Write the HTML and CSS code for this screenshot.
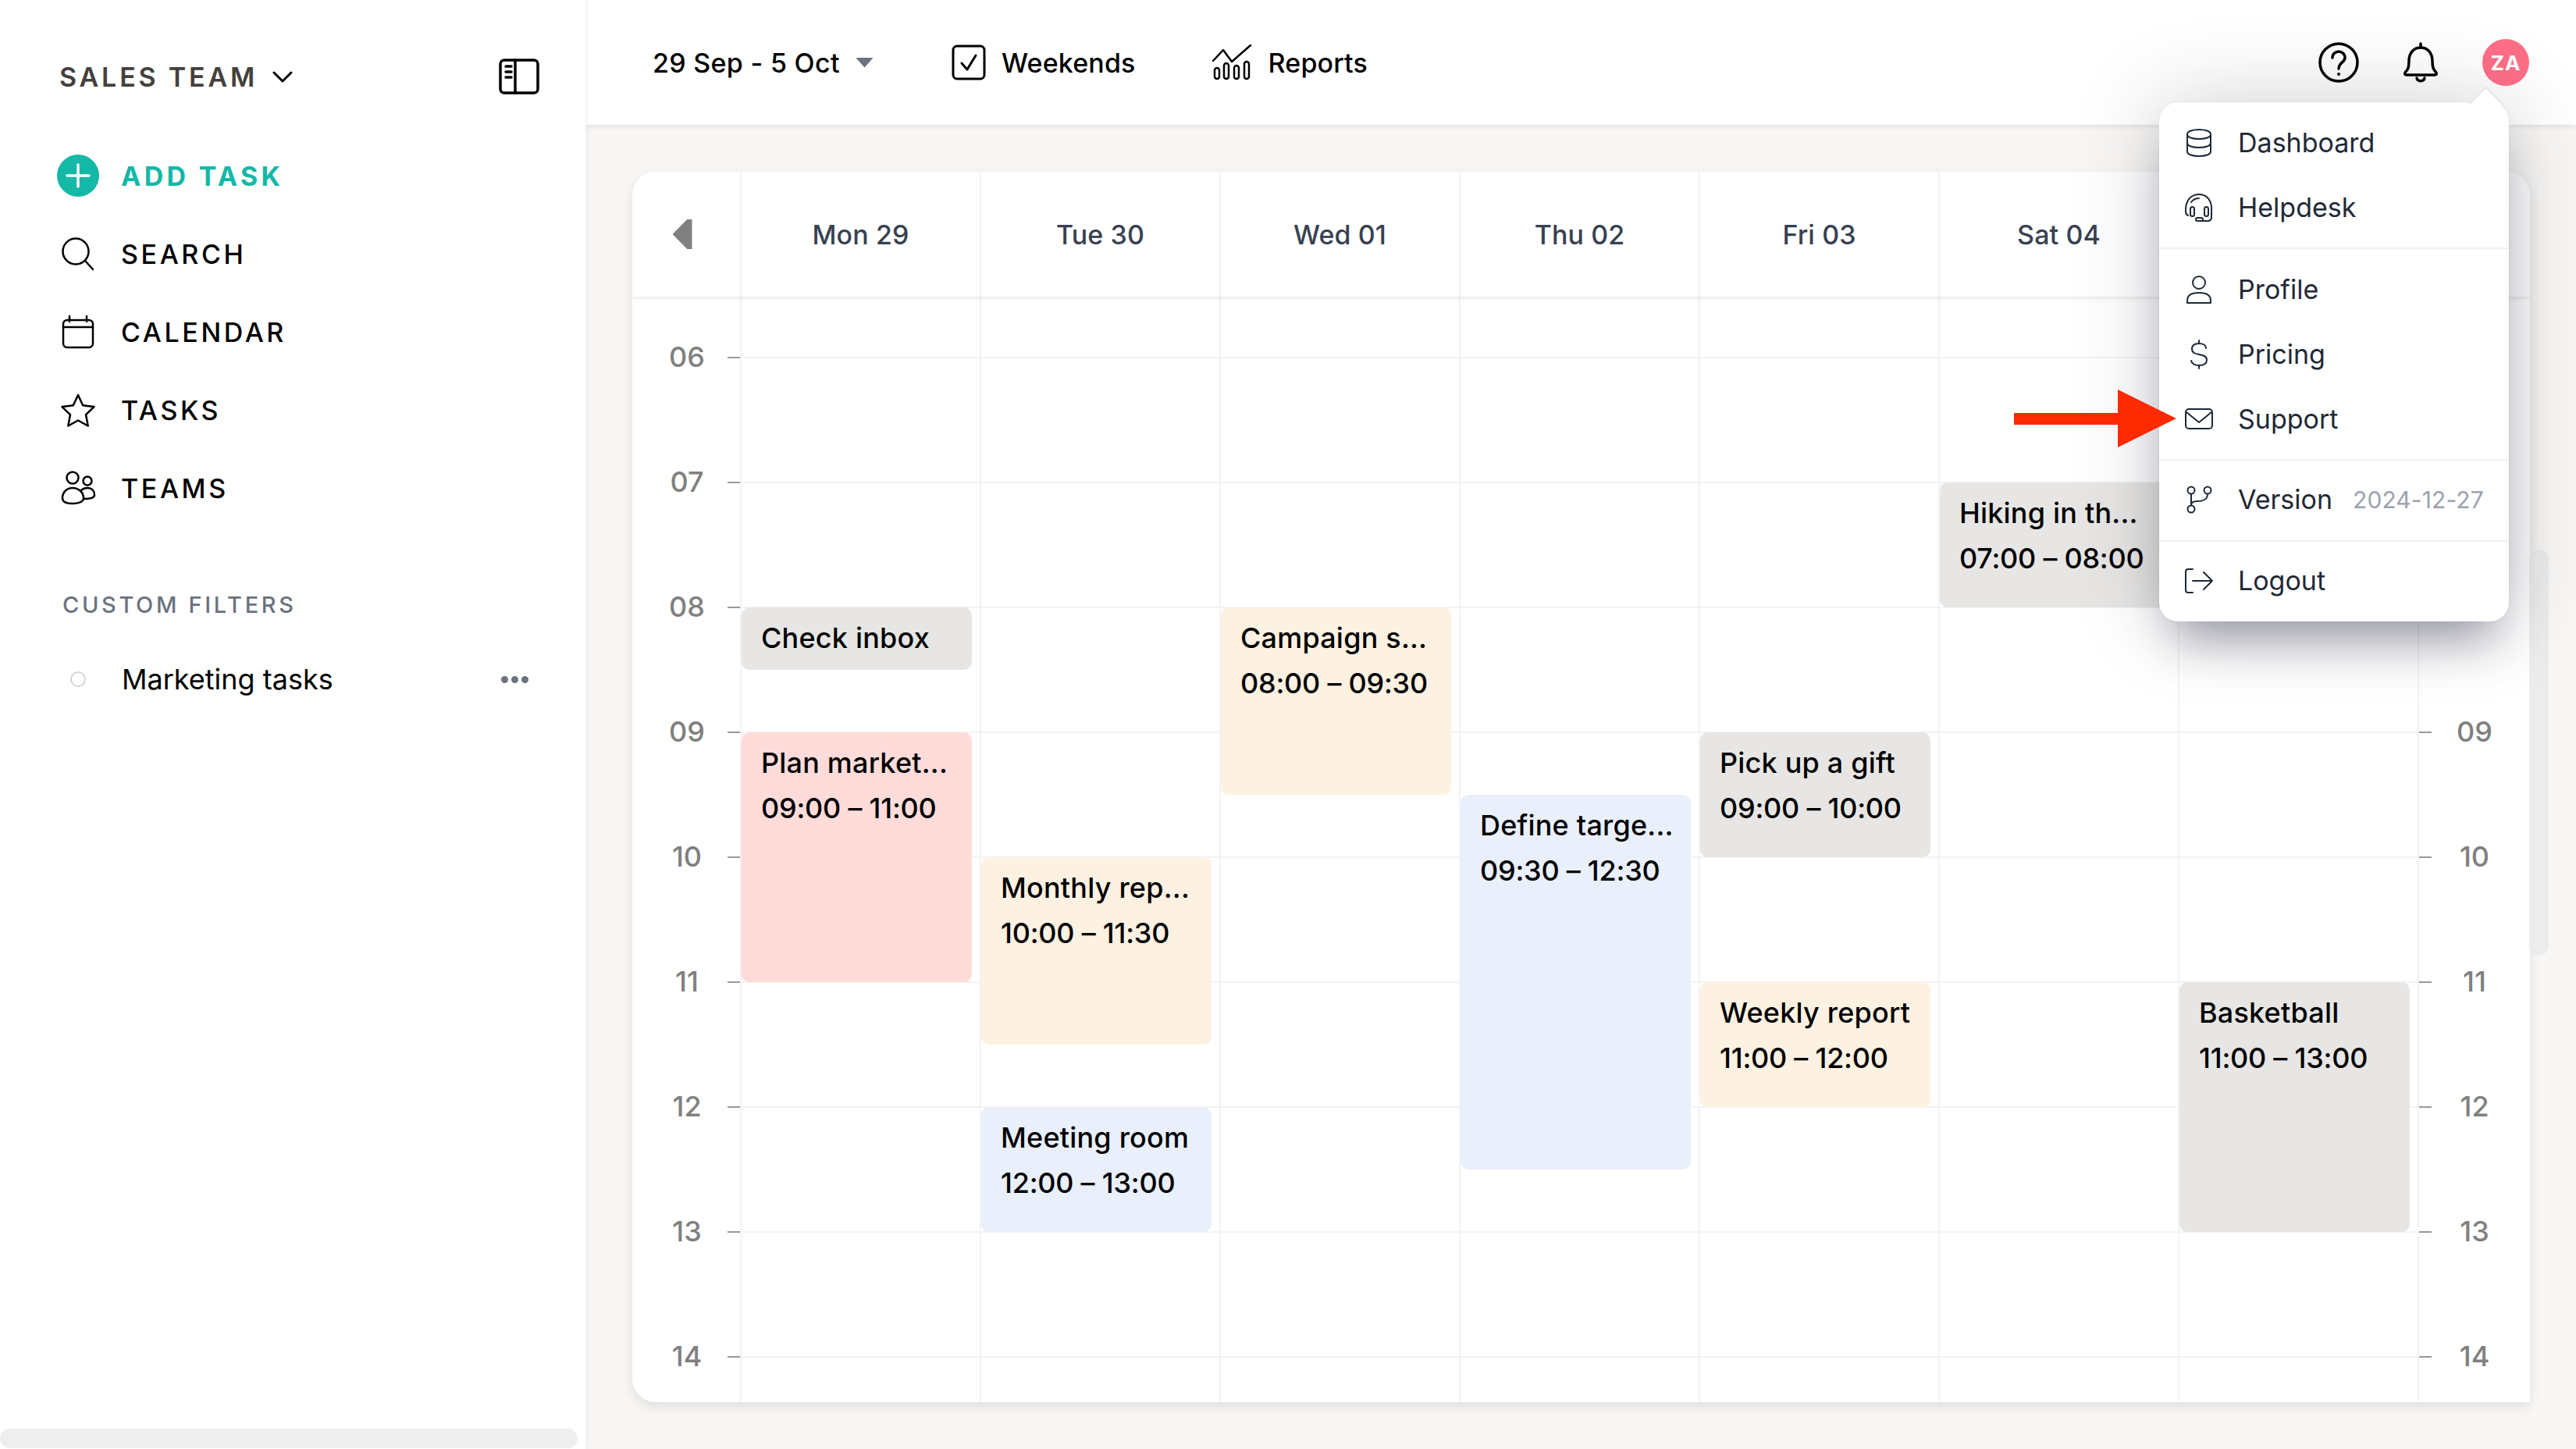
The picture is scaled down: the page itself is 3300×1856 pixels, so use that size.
FILE: index.html
```html
<!DOCTYPE html>
<html lang="en">
<head>
    <meta charset="UTF-8">
    <meta name="viewport" content="width=device-width, initial-scale=1.0">
    <title>Calendar</title>
    <link rel="stylesheet" href="styles.css">
</head>
<body>
    <div class="app">
        <aside class="sidebar">
            <div class="sidebar-head">
                <span class="team-name">SALES TEAM</span>
                <svg class="team-chevron" width="26" height="15" viewBox="0 0 26 15"><path d="M2 2l11 11L24 2"/></svg>
                <svg class="panel-icon" width="52" height="46" viewBox="0 0 52 46"><rect x="2" y="2" width="48" height="42" rx="5"/><path d="M21 2v42"/><path class="panel-dots" d="M9 10h7M9 17h7M9 24h7"/></svg>
            </div>
            <nav class="nav">
                <a class="nav-item nav-add">
                    <svg width="54" height="54" viewBox="0 0 54 54"><circle class="add-disc" cx="27" cy="27" r="27"/><path class="add-cross" d="M27 13v28M13 27h28"/></svg>
                    <span>ADD TASK</span>
                </a>
                <a class="nav-item">
                    <svg width="54" height="44" viewBox="0 0 54 44"><circle cx="24" cy="19" r="16.5"/><path d="M36 31l10 11"/></svg>
                    <span>SEARCH</span>
                </a>
                <a class="nav-item">
                    <svg width="54" height="44" viewBox="0 0 54 44"><rect x="8" y="7" width="38" height="35" rx="5"/><path d="M8 16h38M16 2v7M38 2v7"/></svg>
                    <span>CALENDAR</span>
                </a>
                <a class="nav-item">
                    <svg width="54" height="44" viewBox="0 0 54 44"><path d="M27 3l6.2 13.2 14.3 1.9-10.5 10 2.700 14.400L27 35.500 14.300 42.500l2.700-14.400-10.500-10 14.300-1.900z"/></svg>
                    <span>TASKS</span>
                </a>
                <a class="nav-item">
                    <svg width="54" height="44" viewBox="0 0 54 44"><circle cx="20" cy="9" r="7.500"/><circle cx="39" cy="13" r="5.500"/><path d="M7 35c0-8 6-13 13-13s14 5 14 13c0 5-7 7-14 7S7 40 7 35z"/><path d="M31 25c2-2 5-3 8-3 6 0 9 4 9 9 0 4-5 5-13 5"/></svg>
                    <span>TEAMS</span>
                </a>
            </nav>
            <h4 class="filters-title">CUSTOM FILTERS</h4>
            <div class="filter-row">
                <span class="filter-dot"></span>
                <span class="filter-name">Marketing tasks</span>
                <span class="filter-more"><i></i><i></i><i></i></span>
            </div>
            <div class="sidebar-scroll"></div>
        </aside>

        <main class="main">
            <header class="topbar">
                <div class="date-range">29 Sep - 5 Oct</div>
                <span class="caret"></span>
                <div class="topbar-btn weekends">
                    <svg width="44" height="46" viewBox="0 0 44 46"><rect x="2" y="2" width="40" height="42" rx="5"/><path d="M13 24l7 8 11-18"/></svg>
                    <span>Weekends</span>
                </div>
                <div class="topbar-btn reports">
                    <svg width="52" height="46" viewBox="0 0 52 46"><path d="M1 21L14 7l11 15L49 1"/><rect x="3" y="30" width="6" height="14" rx="3"/><rect x="15" y="24" width="6" height="20" rx="3"/><rect x="28" y="27" width="6" height="17" rx="3"/><rect x="41" y="22" width="6" height="22" rx="3"/></svg>
                    <span>Reports</span>
                </div>
                <div class="topbar-right">
                    <svg width="52" height="52" viewBox="0 0 52 52"><circle cx="26" cy="26" r="24"/><path d="M18 20c0-5 4-8 8-8s8 3 8 8c0 6-8 6-8 14"/><circle class="icon-fill" cx="26" cy="41" r="2"/></svg>
                    <svg class="bell" width="46" height="52" viewBox="0 0 46 52"><path d="M23 2v5M8 24c0-10 6-17 15-17s15 7 15 17c0 8 1 11 5 15 1 2 0 3-2 3H5c-2 0-3-1-2-3 4-4 5-7 5-15z"/><path d="M18 46c1 5 9 5 10 0"/></svg>
                    <div class="avatar">ZA</div>
                </div>
            </header>

            <section class="calendar">
                <div class="cal-head">
                    <div class="cal-cell cal-prev"><span class="prev-arrow"></span></div>
                    <div class="cal-cell">Mon 29</div>
                    <div class="cal-cell">Tue 30</div>
                    <div class="cal-cell">Wed 01</div>
                    <div class="cal-cell">Thu 02</div>
                    <div class="cal-cell">Fri 03</div>
                    <div class="cal-cell">Sat 04</div>
                    <div class="cal-cell"></div>
                    <div class="cal-cell cal-next"></div>
                </div>
                <div class="cal-body">
                    <div class="hours hours-left">
                        <div class="hour"><span>06</span></div>
                        <div class="hour"><span>07</span></div>
                        <div class="hour"><span>08</span></div>
                        <div class="hour"><span>09</span></div>
                        <div class="hour"><span>10</span></div>
                        <div class="hour"><span>11</span></div>
                        <div class="hour"><span>12</span></div>
                        <div class="hour"><span>13</span></div>
                        <div class="hour"><span>14</span></div>
                    </div>
                    <div class="day">
                        <div class="event ev-gray" style="grid-row: 6 / span 1"><b>Check inbox</b></div>
                        <div class="event ev-red" style="grid-row: 8 / span 4"><b>Plan market...</b><span>09:00 – 11:00</span></div>
                    </div>
                    <div class="day">
                        <div class="event ev-cream" style="grid-row: 10 / span 3"><b>Monthly rep...</b><span>10:00 – 11:30</span></div>
                        <div class="event ev-blue" style="grid-row: 14 / span 2"><b>Meeting room</b><span>12:00 – 13:00</span></div>
                    </div>
                    <div class="day">
                        <div class="event ev-cream" style="grid-row: 6 / span 3"><b>Campaign s...</b><span>08:00 – 09:30</span></div>
                    </div>
                    <div class="day">
                        <div class="event ev-blue" style="grid-row: 9 / span 6"><b>Define targe...</b><span>09:30 – 12:30</span></div>
                    </div>
                    <div class="day">
                        <div class="event ev-gray" style="grid-row: 8 / span 2"><b>Pick up a gift</b><span>09:00 – 10:00</span></div>
                        <div class="event ev-cream" style="grid-row: 12 / span 2"><b>Weekly report</b><span>11:00 – 12:00</span></div>
                    </div>
                    <div class="day">
                        <div class="event ev-gray" style="grid-row: 4 / span 2"><b>Hiking in th...</b><span>07:00 – 08:00</span></div>
                    </div>
                    <div class="day">
                        <div class="event ev-gray" style="grid-row: 12 / span 4"><b>Basketball</b><span>11:00 – 13:00</span></div>
                    </div>
                    <div class="hours hours-right">
                        <div class="hour"><span></span></div>
                        <div class="hour"><span></span></div>
                        <div class="hour"><span></span></div>
                        <div class="hour"><span>09</span></div>
                        <div class="hour"><span>10</span></div>
                        <div class="hour"><span>11</span></div>
                        <div class="hour"><span>12</span></div>
                        <div class="hour"><span>13</span></div>
                        <div class="hour"><span>14</span></div>
                    </div>
                </div>
            </section>
            <div class="main-scroll"></div>
        </main>

        <div class="menu">
            <div class="menu-group">
                <a class="menu-item">
                    <svg width="36" height="38" viewBox="0 0 36 38"><path d="M3 8c0-4 7-6 15-6s15 2 15 6v22c0 4-7 6-15 6S3 34 3 30z"/><path d="M3 8c0 4 7 6 15 6s15-2 15-6M3 19c0 4 7 6 15 6s15-2 15-6"/></svg>
                    Dashboard
                </a>
                <a class="menu-item">
                    <svg width="36" height="38" viewBox="0 0 36 38"><path d="M1 20C2 8 9 2 18 2s15 6 16 16"/><rect x="7" y="18" width="5" height="12" rx="2.500"/><rect x="25" y="18" width="5" height="12" rx="2.500"/><path d="M34 18v13c0 3-2 5-5 5h-6"/><rect x="14" y="32" width="9" height="4" rx="2"/><path d="M1 20v4c0 2 1 4 3 5"/><path d="M8 12c2-3 6-5 10-5"/></svg>
                    Helpdesk
                </a>
            </div>
            <div class="menu-group">
                <a class="menu-item">
                    <svg width="36" height="38" viewBox="0 0 36 38"><circle cx="18" cy="10" r="8"/><path d="M3 36v-3c0-7 6-10 15-10s15 3 15 10v3z"/></svg>
                    Profile
                </a>
                <a class="menu-item">
                    <svg width="36" height="38" viewBox="0 0 36 38"><path d="M27 11c0-4-4-6-9-6s-9 2-9 7 4 6 9 7 10 2 10 7-4 7-10 7-9-2-10-6"/><path d="M18 1v4M18 33v4"/></svg>
                    Pricing
                </a>
                <a class="menu-item">
                    <svg width="36" height="38" viewBox="0 0 36 38"><rect x="1" y="6" width="34" height="25" rx="4"/><path d="M2 10l16 13 16-13"/></svg>
                    Support
                </a>
            </div>
            <div class="menu-group menu-group-short">
                <a class="menu-item">
                    <svg width="36" height="38" viewBox="0 0 36 38"><circle cx="8" cy="7" r="4.500"/><circle cx="29" cy="7" r="4.500"/><circle cx="8" cy="31" r="4.500"/><path d="M8 12v14M29 12c0 7-7 9-13 9-4 0-8 1-8 5"/></svg>
                    Version
                    <span class="menu-version">2024-12-27</span>
                </a>
            </div>
            <div class="menu-group menu-group-short">
                <a class="menu-item">
                    <svg width="36" height="38" viewBox="0 0 36 38"><path d="M10 4H4C2 4 1 5 1 7v24c0 2 1 3 3 3h6"/><path d="M10 19h25M24 8l11 11-11 11"/></svg>
                    Logout
                </a>
            </div>
        </div>

        <svg class="red-arrow" width="209" height="74" viewBox="0 0 209 74"><path d="M0 30h133V0l75 37-75 37V45H0z"/></svg>
    </div>
</body>
</html>
```
FILE: styles.css
```css
/* Reset */
* {
    margin: 0;
    padding: 0;
    box-sizing: border-box;
}
html, body {
    height: 100%;
    overflow: hidden;
}
body {
    font-family: Inter, "Liberation Sans", sans-serif;
    color: #000;
    background: #f8f7f5;
}
svg {
    fill: none;
    stroke: currentColor;
    stroke-width: 2.5;
    stroke-linecap: round;
    stroke-linejoin: round;
    flex-shrink: 0;
}
.app {
    position: relative;
    display: flex;
    height: 100vh;
}

/* Sidebar */
.sidebar {
    position: relative;
    width: 750px;
    flex-shrink: 0;
    background: #fff;
    z-index: 1;
    box-shadow: 2px 0 8px rgba(0, 0, 0, 0.05);
}
.sidebar-head {
    display: flex;
    align-items: center;
    height: 52px;
    margin-top: 72px;
    padding: 0 60px 0 76px;
}
.team-name {
    font-size: 34px;
    font-weight: 600;
    letter-spacing: 3.8px;
    color: #44403c;
}
.team-chevron {
    margin-left: 19px;
    stroke-width: 3;
}
.panel-icon {
    margin-left: auto;
    margin-right: -1px;
    stroke-width: 3.5;
}
.panel-dots {
    stroke-width: 3.5;
}
.nav {
    margin-top: 51px;
}
.nav-item {
    display: flex;
    align-items: center;
    gap: 28px;
    height: 100px;
    padding-left: 73px;
    font-size: 34px;
    font-weight: 500;
    letter-spacing: 3.6px;
}
.nav-add {
    font-weight: 700;
    letter-spacing: 4.3px;
    color: #14b8a6;
}
.add-disc {
    fill: #14b8a6;
    stroke: none;
}
.add-cross {
    stroke: #fff;
    stroke-width: 3.500;
}
.filters-title {
    margin: 80px 0 25px 80px;
    height: 40px;
    line-height: 40px;
    font-size: 29px;
    font-weight: 500;
    letter-spacing: 3.65px;
    color: #6b7280;
}
.filter-row {
    display: flex;
    align-items: center;
    height: 100px;
    padding: 0 73px 0 90px;
}
.filter-dot {
    width: 20px;
    height: 20px;
    border: 2px solid #d1d5db;
    border-radius: 50%;
}
.filter-name {
    margin-left: 46px;
    font-size: 36px;
    font-weight: 400;
}
.filter-more {
    display: flex;
    gap: 4px;
    margin-left: auto;
}
.filter-more i {
    width: 9px;
    height: 9px;
    border-radius: 50%;
    background: #6b7280;
}
.sidebar-scroll {
    position: absolute;
    left: 0;
    bottom: 1px;
    width: 740px;
    height: 25px;
    border-radius: 13px;
    background: #eee;
}

/* Main area */
.main {
    position: relative;
    flex: 1;
    min-width: 0;
    background: #f8f7f5;
}
.topbar {
    display: flex;
    align-items: center;
    height: 160px;
    padding: 0 60px 0 86px;
    background: #fff;
    box-shadow: 0 2px 6px rgba(0, 0, 0, 0.1);
    font-size: 34px;
    font-weight: 500;
    letter-spacing: 0.15px;
}
.date-range {
    width: 240px;
    white-space: nowrap;
    letter-spacing: 0.3px;
}
.caret {
    width: 23px;
    height: 13px;
    margin-left: 20px;
    background: #6b7280;
    clip-path: polygon(0 0, 100% 0, 50% 100%);
}
.topbar-btn {
    display: flex;
    align-items: center;
}
.weekends {
    gap: 20px;
    margin-left: 100px;
}
.weekends svg {
    stroke-width: 3;
}
.reports {
    gap: 20px;
    margin-left: 98px;
}
.reports svg {
    stroke-width: 2.500;
}
.topbar-right {
    display: flex;
    align-items: center;
    gap: 56px;
    margin-left: auto;
}
.topbar-right svg {
    stroke-width: 3.500;
}
.icon-fill {
    fill: currentColor;
    stroke: none;
}
.avatar {
    display: flex;
    align-items: center;
    justify-content: center;
    width: 60px;
    height: 60px;
    border-radius: 50%;
    background: #ff6f87;
    color: #fff;
    font-size: 26px;
    font-weight: 700;
    letter-spacing: 1px;
}

/* Calendar card */
.calendar {
    width: 2431px;
    height: 1576px;
    margin: 60px 0 0 60px;
    background: #fff;
    border-radius: 30px 30px 0 30px;
    box-shadow: 0 6px 16px rgba(0, 0, 0, 0.1);
    overflow: hidden;
}
.cal-head,
.cal-body {
    display: grid;
    grid-template-columns: 140px repeat(7, 307px) 1fr;
}
.cal-head {
    position: relative;
    height: 160px;
    background: #fff;
    box-shadow: 0 2px 6px rgba(0, 0, 0, 0.1);
    z-index: 1;
}
.cal-cell {
    display: flex;
    align-items: center;
    justify-content: center;
    border-right: 2px solid #f3f3f3;
    font-size: 34px;
    font-weight: 500;
    letter-spacing: 0.1px;
    color: #374151;
}
.cal-next {
    border-right: 0;
}
.prev-arrow {
    width: 25px;
    height: 38px;
    margin-right: 10px;
    background: #808080;
    clip-path: polygon(100% 0, 100% 100%, 75% 100%, 0 50%, 75% 0);
}
.cal-body {
    height: 1416px;
    overflow: hidden;
}
.hours {
    margin-top: -2px;
}
.hours-left {
    border-right: 2px solid #f3f3f3;
}
.hour {
    display: flex;
    align-items: center;
    height: 160px;
    font-size: 36px;
    line-height: 36px;
    font-weight: 500;
    color: #808080;
}
.hour span {
    position: relative;
    top: -1px;
}
.hour::after {
    content: "";
    width: 16px;
    height: 2px;
    background: #999;
}
.hours-left .hour {
    justify-content: flex-end;
}
.hours-left .hour span {
    width: 68px;
    margin-right: 18px;
    margin-left: auto;
    text-align: center;
}
.hours-right .hour {
    flex-direction: row-reverse;
    justify-content: flex-end;
}
.hours-right .hour span {
    width: 68px;
    margin-left: 21px;
    text-align: center;
}
.day {
    display: grid;
    grid-template-rows: 78px repeat(18, 80px);
    border-right: 2px solid #f3f3f3;
    background: linear-gradient(#f3f3f3 2px, transparent 2px) 0 77px / 100% 160px;
}

/* Events */
.event {
    display: flex;
    flex-direction: column;
    grid-column: 1;
    margin-right: 10px;
    padding: 10px 25px 0;
    border-radius: 10px;
    font-size: 36px;
    line-height: 58px;
    font-weight: 500;
    white-space: nowrap;
    overflow: hidden;
}
.event b {
    font-weight: 500;
    letter-spacing: 0.2px;
}
.event span {
    letter-spacing: -0.25px;
}
.ev-gray {
    background: #e7e6e4;
}
.ev-red {
    background: #ffdcd9;
}
.ev-cream {
    background: #fdf1e1;
}
.ev-blue {
    background: #e9effb;
}
.main-scroll {
    position: absolute;
    left: 2490px;
    top: 704px;
    width: 25px;
    height: 520px;
    border-radius: 13px;
    background: #ececec;
}

/* User menu */
.menu {
    position: absolute;
    left: 2766px;
    top: 131px;
    width: 448px;
    background: #fff;
    border-radius: 24px;
    box-shadow: 0 0 2px rgba(0, 0, 0, 0.1), 0 0 110px rgba(40, 40, 60, 0.22), 0 40px 60px -20px rgba(30, 30, 60, 0.4);
    z-index: 2;
}
.menu::before {
    content: "";
    position: absolute;
    top: -14px;
    right: 14px;
    width: 29px;
    height: 29px;
    background: #fff;
    border-top: 2px solid #e5e5e5;
    border-left: 2px solid #e5e5e5;
    transform: rotate(45deg);
}
.menu-group {
    position: relative;
    padding: 10px 0;
    border-bottom: 2px solid #f1f1f3;
}
.menu-group-short {
    padding: 8px 0 11px;
}
.menu-group:last-child {
    border-bottom: 0;
}
.menu-item {
    display: flex;
    align-items: center;
    gap: 32px;
    height: 83px;
    padding-left: 33px;
    font-size: 34px;
    color: #1f2937;
    white-space: nowrap;
}
.menu-item svg {
    stroke-width: 2;
}
.menu-version {
    margin-left: -6px;
    font-size: 30px;
    letter-spacing: 0.1px;
    color: #9ca3af;
}
.red-arrow {
    position: absolute;
    left: 2580px;
    top: 499px;
    fill: #ff2a00;
    stroke: none;
    z-index: 3;
}
```
